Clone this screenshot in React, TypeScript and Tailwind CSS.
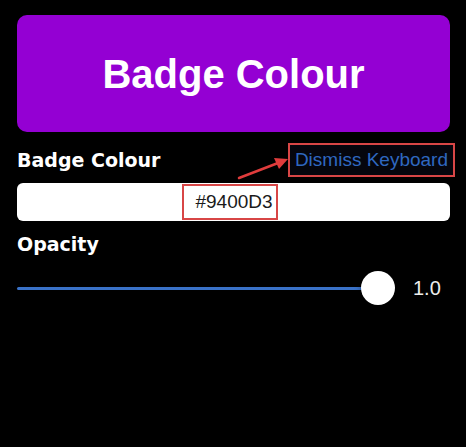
import React, { useState } from "react";

const App: React.FC = () => {
  const [colour] = useState("#9400D3");
  const [opacity] = useState(1.0);

  return (
    <div className="relative min-h-screen w-full bg-black px-[17px] pt-[15px] font-['Liberation_Sans','Noto_Sans',sans-serif]">
      {/* badge preview */}
      <div className="flex h-[117px] w-[433px] items-center justify-center rounded-[10px] bg-[#9400D3]">
        <span className="text-[40px] font-bold leading-none text-white">Badge Colour</span>
      </div>

      <div className="mt-[11px] flex h-[34px] w-[438px] items-center justify-between">
        <span className="pt-[1px] font-['DejaVu_Sans',sans-serif] text-[19px] font-bold text-white">Badge Colour</span>
        <button className="flex h-[34px] items-center border-2 border-[#d84646] bg-[#05060d] px-[5px] text-[19px] text-[#2f68c0]">
          Dismiss Keyboard
        </button>
      </div>

      <div className="mt-[6px] flex h-[38px] w-[433px] justify-center rounded-md bg-white">
        <span className="mr-[7px] mt-[1px] flex h-[36px] items-center border-2 border-[#d84646] pl-[11px] pr-[3px] text-[19px] text-[#1a1a1a]">
          {colour}
        </span>
      </div>

      <div className="mt-[11px] h-[24px] font-['DejaVu_Sans',sans-serif] text-[19px] font-bold leading-[24px] text-white">
        Opacity
      </div>

      <div className="mt-[15px] flex h-[34px] items-center">
        <div className="relative flex h-[34px] w-[378px] items-center">
          <div className="h-[3px] w-[361px] rounded-full bg-[#3a72c8]" />
          <div className="absolute right-0 top-0 h-[34px] w-[34px] rounded-full bg-white shadow-[0_2px_6px_rgba(0,0,0,0.4)]" />
        </div>
        <span className="ml-[18px] text-[20px] text-[#ececec]">{opacity.toFixed(1)}</span>
      </div>

      {/* annotation arrow */}
      <svg className="pointer-events-none absolute left-0 top-0" width="466" height="447" viewBox="0 0 466 447">
        <line x1="239" y1="178" x2="278" y2="163" stroke="#e03c3c" strokeWidth="2.5" strokeLinecap="round" />
        <polygon points="288,159 274,158 279,169" fill="#e03c3c" />
      </svg>
    </div>
  );
};

export default App;
